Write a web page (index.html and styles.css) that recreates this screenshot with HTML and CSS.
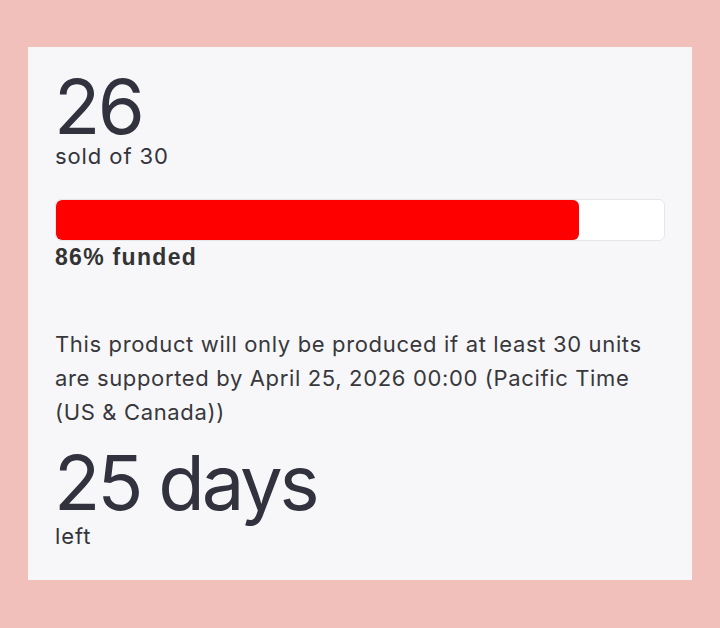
FILE: index.html
```html
<!DOCTYPE html>
<html>
<head>
<meta charset="utf-8">
<link rel="stylesheet" href="styles.css">
</head>
<body>
<div class="card">
  <div class="stat">
    <div class="big">26</div>
    <div class="sub">sold of 30</div>
  </div>
  <div class="progress">
    <div class="bar"><div class="fill" style="width:86%"></div></div>
    <div class="label">86% funded</div>
  </div>
  <p class="note">This product will only be produced if at least 30 units are supported by April 25, 2026 00:00 (Pacific Time (US &amp; Canada))</p>
  <div class="stat days">
    <div class="big">25 days</div>
    <div class="sub">left</div>
  </div>
</div>
</body>
</html>
```
FILE: styles.css
```css
html, body { margin: 0; padding: 0; }
body {
  background: #f2c0ba;
  padding: 47px 28px 48px;
  font-family: Inter, "Liberation Sans", sans-serif;
  color: #33333f;
}
.card {
  background: #f7f7f9;
  height: 533px;
  box-sizing: border-box;
  padding: 21px 27px 0 27px;
}
.big {
  font-size: 76px;
  line-height: 76px;
  color: #32323f;
  letter-spacing: -2.6px;
  margin-left: -1px;
}
.sub {
  font-size: 22px;
  line-height: 24px;
  color: #33333b;
  letter-spacing: 0.9px;
}
.progress { margin-top: 31px; }
.bar {
  height: 42px;
  box-sizing: border-box;
  border: 1px solid #e6e6ea;
  border-radius: 6px;
  background: #fff;
  overflow: hidden;
}
.fill {
  height: 100%;
  background: #ff0000;
  border-radius: 6px;
}
.label {
  font-family: "Liberation Sans", Arial, sans-serif;
  font-weight: bold;
  font-size: 23px;
  line-height: 32px;
  letter-spacing: 1.3px;
  color: #333;
}
.note {
  margin: 54px 0 0;
  font-size: 22px;
  line-height: 34px;
  color: #38383c;
  letter-spacing: 0.65px;
}
.days { margin-top: 15px; }
.days .big { letter-spacing: -3.2px; }
.days .sub { margin-top: 4px; }
```
